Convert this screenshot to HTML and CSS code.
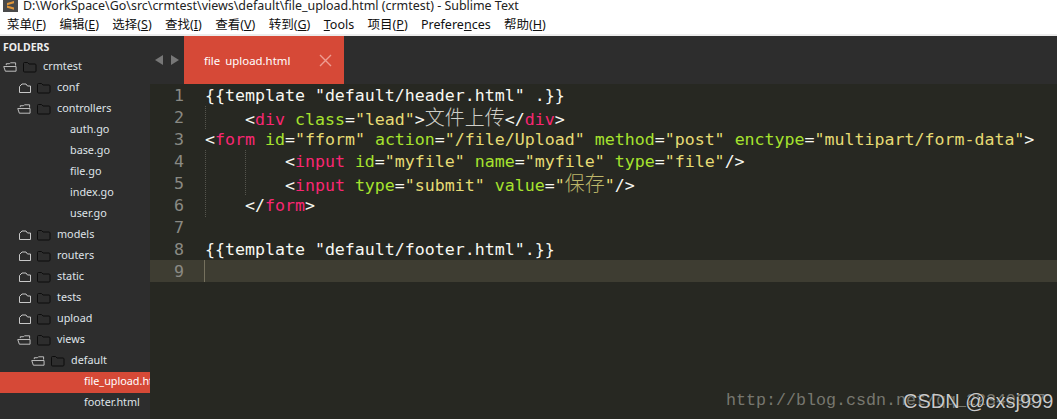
FILE: index.html
```html
<!DOCTYPE html>
<html lang="zh">
<head>
<meta charset="utf-8">
<title>file_upload.html (crmtest) - Sublime Text</title>
<link rel="stylesheet" href="styles.css">
</head>
<body>
<svg width="0" height="0" class="defs">
  <symbol id="closed" viewBox="0 0 14 12"><path d="M2.5 10.5V4.5L5 2H9L10.5 4H13.5V10.5Z" fill="none" stroke="#c8c8c8" stroke-width="1"/></symbol>
  <symbol id="open" viewBox="0 0 15 12"><path d="M3.5 4V2.5H7L8 1.5H13.5V4.5M2.5 10.5L.8 5.5H14V10.5Z" fill="none" stroke="#c8c8c8" stroke-width="1"/></symbol>
  <symbol id="folder" viewBox="0 0 14 12"><path d="M.5 10V2.5Q.5 1.5 1.5 1.5H4.5L6 3H12Q13 3 13 4V10Q13 11 12 11H1.5Q.5 11 .5 10Z" fill="none" stroke="#0d0d0d" stroke-width="1"/></symbol>
</svg>
<div class="titlebar">
  <svg class="appicon" width="15" height="12" viewBox="0 0 15 12"><rect width="15" height="12" fill="#4a4a4a"/><path d="M4 3L11 1V3.2L4 5.2ZM4 5.6L11 7.6V9.8L4 7.8Z" fill="#e0963a"/></svg>
  <span class="title-text">D:\WorkSpace\Go\src\crmtest\views\default\file_upload.html (crmtest) - Sublime Text</span>
</div>
<nav class="menubar">
  <span>菜单(<u>F</u>)</span><span>编辑(<u>E</u>)</span><span>选择(<u>S</u>)</span><span>查找(<u>I</u>)</span><span>查看(<u>V</u>)</span><span>转到(<u>G</u>)</span><span><u>T</u>ools</span><span>项目(<u>P</u>)</span><span>Prefere<u>n</u>ces</span><span>帮助(<u>H</u>)</span>
</nav>
<main class="window">
  <aside class="sidebar">
    <h2 class="side-title">FOLDERS</h2>
    <ul class="tree">
      <li class="row d0"><svg class="arrow"><use href="#open"/></svg><svg class="dir"><use href="#folder"/></svg><span>crmtest</span></li>
      <li class="row d1"><svg class="arrow"><use href="#closed"/></svg><svg class="dir"><use href="#folder"/></svg><span>conf</span></li>
      <li class="row d1"><svg class="arrow"><use href="#open"/></svg><svg class="dir"><use href="#folder"/></svg><span>controllers</span></li>
      <li class="row f2"><span>auth.go</span></li>
      <li class="row f2"><span>base.go</span></li>
      <li class="row f2"><span>file.go</span></li>
      <li class="row f2"><span>index.go</span></li>
      <li class="row f2"><span>user.go</span></li>
      <li class="row d1"><svg class="arrow"><use href="#closed"/></svg><svg class="dir"><use href="#folder"/></svg><span>models</span></li>
      <li class="row d1"><svg class="arrow"><use href="#closed"/></svg><svg class="dir"><use href="#folder"/></svg><span>routers</span></li>
      <li class="row d1"><svg class="arrow"><use href="#closed"/></svg><svg class="dir"><use href="#folder"/></svg><span>static</span></li>
      <li class="row d1"><svg class="arrow"><use href="#closed"/></svg><svg class="dir"><use href="#folder"/></svg><span>tests</span></li>
      <li class="row d1"><svg class="arrow"><use href="#closed"/></svg><svg class="dir"><use href="#folder"/></svg><span>upload</span></li>
      <li class="row d1"><svg class="arrow"><use href="#open"/></svg><svg class="dir"><use href="#folder"/></svg><span>views</span></li>
      <li class="row d2"><svg class="arrow"><use href="#open"/></svg><svg class="dir"><use href="#folder"/></svg><span>default</span></li>
      <li class="row f3 active"><span>file_upload.html</span></li>
      <li class="row f3"><span>footer.html</span></li>
    </ul>
  </aside>
  <section class="editor">
    <div class="tabstrip">
      <div class="pager"><i class="tri left"></i><i class="tri right"></i></div>
      <div class="tab"><span>file<em class="hidden-us">_</em>upload.html</span>
        <svg class="close" width="13" height="13" viewBox="0 0 13 13"><path d="M1 1L12 12M12 1L1 12" stroke="#ee9d92" stroke-width="1.4"/></svg>
      </div>
    </div>
    <div class="code">
      <div class="line"><b class="num">1</b><code>{{template "default/header.html" .}}</code></div>
      <div class="line"><b class="num">2</b><code class="g1">    &lt;<em class="t">div</em> <em class="a">class</em>=<em class="s">"lead"</em>&gt;<em class="zh">文件上传</em>&lt;/<em class="t">div</em>&gt;</code></div>
      <div class="line"><b class="num">3</b><code>&lt;<em class="t">form</em> <em class="a">id</em>=<em class="s">"fform"</em> <em class="a">action</em>=<em class="s">"/file/Upload"</em> <em class="a">method</em>=<em class="s">"post"</em> <em class="a">enctype</em>=<em class="s">"multipart/form-data"</em>&gt;</code></div>
      <div class="line"><b class="num">4</b><code class="g2">        &lt;<em class="t">input</em> <em class="a">id</em>=<em class="s">"myfile"</em> <em class="a">name</em>=<em class="s">"myfile"</em> <em class="a">type</em>=<em class="s">"file"</em>/&gt;</code></div>
      <div class="line"><b class="num">5</b><code class="g2">        &lt;<em class="t">input</em> <em class="a">type</em>=<em class="s">"submit"</em> <em class="a">value</em>=<em class="s">"<em class="zh zh-s">保存</em>"</em>/&gt;</code></div>
      <div class="line"><b class="num">6</b><code class="g1">    &lt;/<em class="t">form</em>&gt;</code></div>
      <div class="line"><b class="num">7</b><code></code></div>
      <div class="line"><b class="num">8</b><code>{{template "default/footer.html".}}</code></div>
      <div class="line current"><b class="num">9</b><code class="caret"></code></div>
    </div>
  </section>
</main>
<div class="wm-a">http://blog.csdn.net/qq_22340957</div>
<div class="wm-b">CSDN @cxsj999</div>
</body>
</html>
```

FILE: styles.css
```css
* { box-sizing: border-box; }
html, body { margin: 0; height: 419px; overflow: hidden; }
body { position: relative; display: flex; flex-direction: column; background: #272822; font-family: "Noto Sans", "Noto Sans CJK SC", sans-serif; }
.defs { position: absolute; }
ul { list-style: none; margin: 0; padding: 0; }

.titlebar { height: 14px; flex: none; display: flex; align-items: flex-start; gap: 5px; padding-left: 3px; background: #fff; color: #222; white-space: nowrap; overflow: hidden; }
.title-text { font: 12.45px/11px "Noto Sans", "Noto Sans CJK SC", sans-serif; }
.appicon { flex: none; }
.menubar { height: 22px; flex: none; display: flex; align-items: center; padding: 2px 0 0 7px; gap: 13.4px; background: #fff; border-bottom: 2px solid #ececec; font: 12.5px/18px "Noto Sans", "Noto Sans CJK SC", sans-serif; color: #111; white-space: nowrap; }

.window { flex: 1; display: flex; min-height: 0; }
.sidebar { flex: none; width: 150px; background: #2d2d2d; overflow: hidden; color: #dfe3e8; }
.side-title { margin: 0; height: 21px; padding: 4px 0 0 3px; font: 700 10.5px/14px "Noto Sans", sans-serif; color: #eee; }
.tree { display: flex; flex-direction: column; }
.row { height: 21px; display: flex; align-items: center; font-size: 10.8px; white-space: nowrap; }
.row span { line-height: 17px; padding-bottom: 4px; }
.arrow { width: 14px; height: 12px; flex: none; margin-bottom: 2px; }
.dir { width: 14px; height: 12px; flex: none; margin: 0 0 2px 6px; }
.row .dir + span { margin-left: 6px; }
.d0 { padding-left: 3px; }
.d1 { padding-left: 17px; }
.d2 { padding-left: 31px; }
.f2 { padding-left: 70px; }
.f3 { padding-left: 84px; }
.active { background: #d64937; color: #fff; }

.editor { flex: 1; min-width: 0; display: flex; flex-direction: column; }
.tabstrip { height: 48px; flex: none; display: flex; background: #2d2d2d; }
.pager { width: 34px; display: flex; align-items: center; gap: 8px; padding: 0 0 1px 5px; }
.tri { display: block; width: 0; height: 0; border-top: 5px solid transparent; border-bottom: 5px solid transparent; }
.tri.left { border-right: 8px solid #777; }
.tri.right { border-left: 8px solid #777; }
.tab { width: 160px; display: flex; align-items: center; justify-content: space-between; padding: 0 12px 0 20px; background: #d64937; color: #fff; font-size: 11.4px; }
.hidden-us { color: #d64937; }

.code { flex: 1; font: 16.6px/22px "DejaVu Sans Mono", monospace; color: #f8f8f2; background: #272822; }
.line { height: 22px; padding-top: 1px; display: flex; }
.num { flex: none; width: 55px; padding-right: 21px; text-align: right; font-weight: 400; color: #8a8a84; }
code { font: inherit; white-space: pre; position: relative; flex: 1; height: 21px; }
em { font-style: normal; }
.t { color: #f92672; }
.a { color: #a6e22e; }
.s { color: #e6db74; }
.zh { font-family: "Noto Sans CJK SC", sans-serif; font-size: 20px; line-height: 20px; font-weight: 300; color: #cfcfc9; }
.zh-s { color: #bdb76a; }
.current { background: #3e3d32; }
.caret { margin-left: -1px; margin-top: -1px; height: 22px; border-left: 1px solid #75715e; }
.g1::before, .g2::before, .g2::after { content: ""; position: absolute; top: -1px; bottom: -1px; width: 0; border-left: 1px dotted #55554d; }
.g1::before, .g2::before { left: 0; }
.g2::after { left: 40px; }

.wm-a { position: absolute; left: 726px; top: 389px; font: 16.67px/24px "Liberation Mono", monospace; color: #77776f; white-space: nowrap; }
.wm-b { position: absolute; left: 903px; top: 388px; font: 20px/26px "Liberation Sans", sans-serif; color: #c9c9c9; white-space: nowrap; text-shadow: 0 0 1px #000; }
```
